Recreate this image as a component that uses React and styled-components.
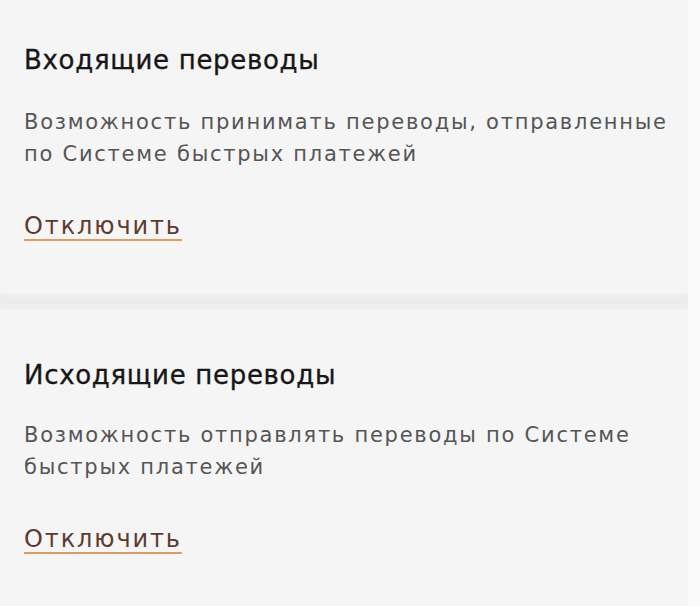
import React from 'react';
import styled, { createGlobalStyle } from 'styled-components';

const GlobalStyle = createGlobalStyle`
  html, body {
    margin: 0;
    padding: 0;
    background: #fbfafb;
  }
  body {
    font-family: "DejaVu Sans", Roboto, Arial, sans-serif;
    -webkit-font-smoothing: antialiased;
  }
`;

const Page = styled.div`
  width: 688px;
  height: 606px;
  display: flex;
  flex-direction: column;
  background: #edebec;
  gap: 17px;
  overflow: hidden;
`;

const Card = styled.section`
  flex: 0 0 ${p => p.first ? '293px' : 'auto'};
  flex-grow: ${p => p.first ? 0 : 1};
  background: #f6f5f6;
  padding: ${p => p.first ? '44px' : '49px'} 6px 0 24px;
  display: flex;
  flex-direction: column;
  box-sizing: border-box;
  box-shadow: 0 0 6px 2px #f3f2f3;
`;

const Title = styled.h2`
  margin: 0;
  font-size: 26px;
  font-weight: 400;
  line-height: 32px;
  letter-spacing: 0.7px;
  color: #171717;
  -webkit-text-stroke: 0.35px #171717;
`;

const Description = styled.p`
  margin: ${p => p.first ? '30px' : '28px'} 0 0;
  font-size: 21px;
  font-weight: 400;
  line-height: 32px;
  letter-spacing: 1.75px;
  color: #555555;
`;

const Link = styled.a`
  margin-top: 42px;
  align-self: flex-start;
  font-size: 24px;
  line-height: 28px;
  letter-spacing: 1.9px;
  color: #5e3a2e;
  text-decoration: underline;
  text-decoration-color: #dc9d62;
  text-decoration-thickness: 2px;
  text-underline-offset: 5px;
  cursor: pointer;
`;

const transfers = [
  {
    title: 'Входящие переводы',
    text: 'Возможность принимать переводы, отправленные по Системе быстрых платежей',
  },
  {
    title: 'Исходящие переводы',
    text: 'Возможность отправлять переводы по Системе быстрых платежей',
  },
];

export default function App() {
  return (
    <>
      <GlobalStyle />
      <Page>
        {transfers.map((t, i) => (
          <Card key={t.title} first={i === 0}>
            <Title>{t.title}</Title>
            <Description first={i === 0}>{t.text}</Description>
            <Link>Отключить</Link>
          </Card>
        ))}
      </Page>
    </>
  );
}
